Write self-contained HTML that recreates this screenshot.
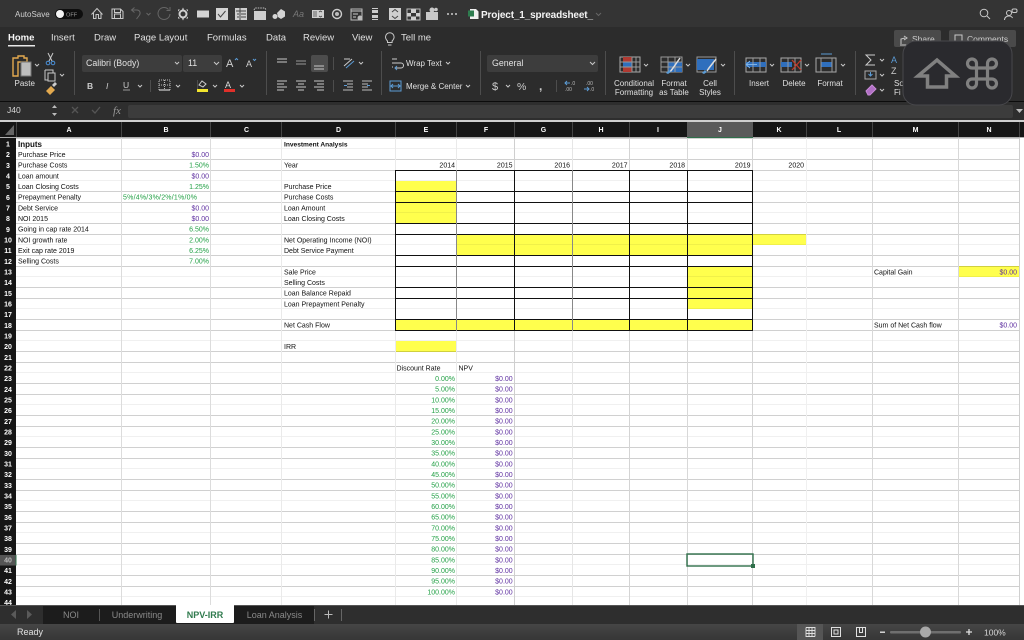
<!DOCTYPE html>
<html><head><meta charset="utf-8"><title>Project_1_spreadsheet_</title>
<style>
html,body{margin:0;padding:0;width:1024px;height:640px;overflow:hidden;background:#fff}
#wrap{position:absolute;left:0;top:0;width:1024px;height:640px;overflow:hidden;background:#fff;filter:blur(.32px)}
svg{position:absolute;left:0;top:0;font-family:"Liberation Sans",sans-serif}
#grid{position:absolute;left:16px;top:137px;width:1003px;height:468px;mix-blend-mode:multiply;
background-image:linear-gradient(to bottom,transparent 1px,#d0d0d0 1px,#d0d0d0 2px,transparent 2px,transparent 11px,#f0f0f0 11px,#f0f0f0 12px,transparent 12px,transparent 22px,#d0d0d0 22px,#d0d0d0 23px,transparent 23px);
background-size:100% 32px}
#y{position:absolute;left:0;top:0}
#y div{position:absolute;background:#ffff4d}
.c{fill:none;stroke:#c8c8c8;stroke-width:1}
.d{fill:none;stroke:#666;stroke-width:1}
.f{fill:#c8c8c8}
.ch{fill:none;stroke:#c8c8c8;stroke-width:1}
.rb{fill:#e0e0e0;font-size:8px}
.tb{fill:#e0e0e0;font-size:9.5px}
.rn{fill:#fff;font-size:7px;font-weight:bold;text-anchor:middle}
.hd{fill:#fff;font-size:7px;font-weight:bold;text-anchor:middle}
.k{fill:#111;font-size:7px}
.b{font-weight:bold}
.p{fill:#5e2fa0;font-size:7px;text-anchor:end}
.g{fill:#22a045;font-size:7px;text-anchor:end}
.e{fill:#111;font-size:7px;text-anchor:end}
.tab{fill:#8a8a8a;font-size:9px;text-anchor:middle}
</style></head><body>
<div id="wrap">
<div id="y">
<div style="left:395px;top:181px;width:62px;height:42px"></div>
<div style="left:457px;top:234px;width:296px;height:21px"></div>
<div style="left:753px;top:234px;width:53px;height:11px"></div>
<div style="left:687px;top:266px;width:66px;height:43px"></div>
<div style="left:395px;top:319px;width:358px;height:11px"></div>
<div style="left:395px;top:341px;width:62px;height:11px"></div>
<div style="left:958px;top:266px;width:61px;height:11px"></div>
</div>
<div id="grid"></div>
<svg width="1024" height="640" viewBox="0 0 1024 640">
<!-- vertical gridlines -->
<g shape-rendering="crispEdges">
<rect x="121" y="137" width="1" height="468" fill="#dcdcdc"/>
<rect x="210" y="137" width="1" height="468" fill="#dcdcdc"/>
<rect x="281" y="137" width="1" height="468" fill="#eaeaea"/>
<rect x="395" y="137" width="1" height="468" fill="#eaeaea"/>
<rect x="456" y="137" width="1" height="468" fill="#eaeaea"/>
<rect x="514" y="137" width="1" height="468" fill="#cfcfcf"/>
<rect x="572" y="137" width="1" height="468" fill="#e6e6e6"/>
<rect x="629" y="137" width="1" height="468" fill="#d4d4d4"/>
<rect x="687" y="137" width="1" height="468" fill="#d8d8d8"/>
<rect x="752" y="137" width="1" height="468" fill="#d4d4d4"/>
<rect x="806" y="137" width="1" height="468" fill="#f0f0f0"/>
<rect x="872" y="137" width="1" height="468" fill="#d8d8d8"/>
<rect x="958" y="137" width="1" height="468" fill="#d8d8d8"/>
<rect x="1019" y="137" width="1" height="468" fill="#cfcfcf"/>
<!-- black borders -->
<g fill="#111">
<rect x="395" y="170" width="358" height="1"/><rect x="395" y="191" width="358" height="1"/>
<rect x="395" y="202" width="358" height="1"/><rect x="395" y="223" width="358" height="1"/>
<rect x="395" y="234" width="358" height="1"/><rect x="395" y="255" width="358" height="1"/>
<rect x="395" y="266" width="358" height="1"/><rect x="395" y="287" width="358" height="1"/>
<rect x="395" y="298" width="358" height="1"/><rect x="395" y="319" width="358" height="1"/>
<rect x="395" y="330" width="358" height="1"/>
<rect x="395" y="170" width="1" height="161"/><rect x="514" y="170" width="1" height="161"/>
<rect x="629" y="170" width="1" height="161"/><rect x="687" y="170" width="1" height="161"/>
<rect x="752" y="170" width="1" height="161"/>
</g>
<rect x="456" y="170" width="1" height="161" fill="#888"/>
<rect x="572" y="170" width="1" height="161" fill="#888"/>
</g>

<!-- sheet text -->
<g>
<text class="k b" x="18" y="146.8" style="font-size:8px">Inputs</text>
<text class="k" x="18" y="157">Purchase Price</text>
<text class="k" x="18" y="167.7">Purchase Costs</text>
<text class="k" x="18" y="178.4">Loan amount</text>
<text class="k" x="18" y="189">Loan Closing Costs</text>
<text class="k" x="18" y="199.7">Prepayment Penalty</text>
<text class="k" x="18" y="210.4">Debt Service</text>
<text class="k" x="18" y="221">NOI 2015</text>
<text class="k" x="18" y="231.7">Going in cap rate 2014</text>
<text class="k" x="18" y="242.4">NOI growth rate</text>
<text class="k" x="18" y="253">Exit cap rate 2019</text>
<text class="k" x="18" y="263.7">Selling Costs</text>

<text class="p" x="209" y="157">$0.00</text>
<text class="g" x="209" y="167.7">1.50%</text>
<text class="p" x="209" y="178.4">$0.00</text>
<text class="g" x="209" y="189">1.25%</text>
<text class="g" x="123" y="199.7" style="text-anchor:start" textLength="74">5%/4%/3%/2%/1%/0%</text>
<text class="p" x="209" y="210.4">$0.00</text>
<text class="p" x="209" y="221">$0.00</text>
<text class="g" x="209" y="231.7">6.50%</text>
<text class="g" x="209" y="242.4">2.00%</text>
<text class="g" x="209" y="253">6.25%</text>
<text class="g" x="209" y="263.7">7.00%</text>

<text class="k b" x="284" y="146.4" style="font-size:6.6px">Investment Analysis</text>
<text class="k" x="284" y="167.7">Year</text>
<text class="k" x="284" y="189">Purchase Price</text>
<text class="k" x="284" y="199.7">Purchase Costs</text>
<text class="k" x="284" y="210.4">Loan Amount</text>
<text class="k" x="284" y="221">Loan Closing Costs</text>
<text class="k" x="284" y="242.4">Net Operating Income (NOI)</text>
<text class="k" x="284" y="253">Debt Service Payment</text>
<text class="k" x="284" y="274.4">Sale Price</text>
<text class="k" x="284" y="285">Selling Costs</text>
<text class="k" x="284" y="295.7">Loan Balance Repaid</text>
<text class="k" x="284" y="306.4">Loan Prepayment Penalty</text>
<text class="k" x="284" y="327.7">Net Cash Flow</text>
<text class="k" x="284" y="349">IRR</text>

<text class="e" x="455" y="167.7">2014</text>
<text class="e" x="512.5" y="167.7">2015</text>
<text class="e" x="570" y="167.7">2016</text>
<text class="e" x="627.5" y="167.7">2017</text>
<text class="e" x="685" y="167.7">2018</text>
<text class="e" x="750.5" y="167.7">2019</text>
<text class="e" x="804" y="167.7">2020</text>

<text class="k" x="874" y="274.4">Capital Gain</text>
<text class="p" x="1017" y="274.4">$0.00</text>
<text class="k" x="874" y="327.7">Sum of Net Cash flow</text>
<text class="p" x="1017" y="327.7">$0.00</text>

<text class="k" x="396.5" y="370.4">Discount Rate</text>
<text class="k" x="458.5" y="370.4">NPV</text>

<g>
<text class="g" x="455" y="381">0.00%</text><text class="p" x="512.7" y="381">$0.00</text>
<text class="g" x="455" y="391.7">5.00%</text><text class="p" x="512.7" y="391.7">$0.00</text>
<text class="g" x="455" y="402.4">10.00%</text><text class="p" x="512.7" y="402.4">$0.00</text>
<text class="g" x="455" y="413">15.00%</text><text class="p" x="512.7" y="413">$0.00</text>
<text class="g" x="455" y="423.7">20.00%</text><text class="p" x="512.7" y="423.7">$0.00</text>
<text class="g" x="455" y="434.4">25.00%</text><text class="p" x="512.7" y="434.4">$0.00</text>
<text class="g" x="455" y="445">30.00%</text><text class="p" x="512.7" y="445">$0.00</text>
<text class="g" x="455" y="455.7">35.00%</text><text class="p" x="512.7" y="455.7">$0.00</text>
<text class="g" x="455" y="466.4">40.00%</text><text class="p" x="512.7" y="466.4">$0.00</text>
<text class="g" x="455" y="477">45.00%</text><text class="p" x="512.7" y="477">$0.00</text>
<text class="g" x="455" y="487.7">50.00%</text><text class="p" x="512.7" y="487.7">$0.00</text>
<text class="g" x="455" y="498.4">55.00%</text><text class="p" x="512.7" y="498.4">$0.00</text>
<text class="g" x="455" y="509">60.00%</text><text class="p" x="512.7" y="509">$0.00</text>
<text class="g" x="455" y="519.7">65.00%</text><text class="p" x="512.7" y="519.7">$0.00</text>
<text class="g" x="455" y="530.4">70.00%</text><text class="p" x="512.7" y="530.4">$0.00</text>
<text class="g" x="455" y="541">75.00%</text><text class="p" x="512.7" y="541">$0.00</text>
<text class="g" x="455" y="551.7">80.00%</text><text class="p" x="512.7" y="551.7">$0.00</text>
<text class="g" x="455" y="562.4">85.00%</text><text class="p" x="512.7" y="562.4">$0.00</text>
<text class="g" x="455" y="573">90.00%</text><text class="p" x="512.7" y="573">$0.00</text>
<text class="g" x="455" y="583.7">95.00%</text><text class="p" x="512.7" y="583.7">$0.00</text>
<text class="g" x="455" y="594.4">100.00%</text><text class="p" x="512.7" y="594.4">$0.00</text>
</g>
</g>

<!-- selected cell -->
<rect x="687" y="554" width="66" height="12" fill="none" stroke="#2f6f4a" stroke-width="1.4"/>
<rect x="751" y="564" width="4" height="4" fill="#2f6f4a"/>

<!-- row headers -->
<rect x="0" y="137" width="16" height="468" fill="#161616"/>
<rect x="0" y="555" width="16" height="10.5" fill="#555"/>
<rect x="15.5" y="555" width="1" height="10.5" fill="#2f6f4a"/>
<g>
<text class="rn" x="8" y="146.5">1</text><text class="rn" x="8" y="157.2">2</text><text class="rn" x="8" y="167.8">3</text><text class="rn" x="8" y="178.5">4</text><text class="rn" x="8" y="189.2">5</text><text class="rn" x="8" y="199.8">6</text><text class="rn" x="8" y="210.5">7</text><text class="rn" x="8" y="221.2">8</text><text class="rn" x="8" y="231.8">9</text><text class="rn" x="8" y="242.5">10</text><text class="rn" x="8" y="253.2">11</text><text class="rn" x="8" y="263.8">12</text><text class="rn" x="8" y="274.5">13</text><text class="rn" x="8" y="285.2">14</text><text class="rn" x="8" y="295.8">15</text><text class="rn" x="8" y="306.5">16</text><text class="rn" x="8" y="317.2">17</text><text class="rn" x="8" y="327.8">18</text><text class="rn" x="8" y="338.5">19</text><text class="rn" x="8" y="349.2">20</text><text class="rn" x="8" y="359.8">21</text><text class="rn" x="8" y="370.5">22</text><text class="rn" x="8" y="381.2">23</text><text class="rn" x="8" y="391.8">24</text><text class="rn" x="8" y="402.5">25</text><text class="rn" x="8" y="413.2">26</text><text class="rn" x="8" y="423.8">27</text><text class="rn" x="8" y="434.5">28</text><text class="rn" x="8" y="445.2">29</text><text class="rn" x="8" y="455.8">30</text><text class="rn" x="8" y="466.5">31</text><text class="rn" x="8" y="477.2">32</text><text class="rn" x="8" y="487.8">33</text><text class="rn" x="8" y="498.5">34</text><text class="rn" x="8" y="509.2">35</text><text class="rn" x="8" y="519.8">36</text><text class="rn" x="8" y="530.5">37</text><text class="rn" x="8" y="541.2">38</text><text class="rn" x="8" y="551.8">39</text><text class="rn" x="8" y="562.5" style="fill:#bbb">40</text><text class="rn" x="8" y="573.2">41</text><text class="rn" x="8" y="583.8">42</text><text class="rn" x="8" y="594.5">43</text><text class="rn" x="8" y="605">44</text>
</g>

<!-- column headers -->
<rect x="0" y="120" width="1024" height="2" fill="#cfcfcf"/>
<rect x="0" y="122" width="1024" height="15" fill="#161616"/>
<rect x="0" y="137" width="1024" height="1" fill="#b0b0b0"/>
<polygon points="5,135 14,135 14,125" fill="#666"/>
<rect x="687" y="122" width="66" height="15" fill="#5a5a5a"/>
<rect x="687" y="137" width="66" height="1" fill="#2f6f4a"/>
<g fill="#444" shape-rendering="crispEdges">
<rect x="16" y="122" width="1" height="15"/><rect x="121" y="122" width="1" height="15"/><rect x="210" y="122" width="1" height="15"/><rect x="281" y="122" width="1" height="15"/><rect x="395" y="122" width="1" height="15"/><rect x="456" y="122" width="1" height="15"/><rect x="514" y="122" width="1" height="15"/><rect x="572" y="122" width="1" height="15"/><rect x="629" y="122" width="1" height="15"/><rect x="806" y="122" width="1" height="15"/><rect x="872" y="122" width="1" height="15"/><rect x="958" y="122" width="1" height="15"/><rect x="1019" y="122" width="1" height="15"/>
</g>
<g>
<text class="hd" x="69" y="132">A</text><text class="hd" x="166" y="132">B</text><text class="hd" x="246.5" y="132">C</text><text class="hd" x="338.5" y="132">D</text><text class="hd" x="426" y="132">E</text><text class="hd" x="486" y="132">F</text><text class="hd" x="543.5" y="132">G</text><text class="hd" x="601" y="132">H</text><text class="hd" x="658" y="132">I</text><text class="hd" x="720" y="132">J</text><text class="hd" x="779" y="132">K</text><text class="hd" x="839" y="132">L</text><text class="hd" x="915.5" y="132">M</text><text class="hd" x="989" y="132">N</text>
</g>

<!-- top chrome backgrounds -->
<rect x="0" y="0" width="1024" height="27" fill="#343434"/>
<rect x="0" y="27" width="1024" height="74" fill="#2c2c2c"/>
<rect x="0" y="101" width="1024" height="1" fill="#0c0c0c"/>
<rect x="0" y="102" width="1024" height="18" fill="#2e2e2e"/>
<rect x="128" y="105" width="885" height="13" rx="2" fill="#3c3c3c"/>

<!-- title bar -->
<text x="15" y="17" fill="#d0d0d0" style="font-size:8px">AutoSave</text>
<rect x="55" y="9" width="28" height="10" rx="5" fill="#0e0e0e"/>
<circle cx="60" cy="14" r="4" fill="#f4f4f4"/>
<text x="66" y="16.3" fill="#999" style="font-size:5.6px">OFF</text>
<path class="c" d="M91.5 14.5 97 8.5l5.5 6M93.5 13v5.5h2.5v-4h2.5v4h2.5V13"/>
<path class="c" d="M112 9h8.5l2.5 2.5V18.5H112ZM114.5 9v3.5h6V9M114.5 18.500v-4.500h6v4.500"/>
<path class="d" d="M136.5 19l3-4c1.500-2.500 0-5-2.500-5h-5M134.500 7.500 131.500 10l3 2.500"/>
<path class="d" d="M146.5 13l2 2 2-2"/>
<path class="d" d="M168.500 9.500a6 6 0 1 0 1.500 4.500M170 7v3.500h-3.500"/>
<circle cx="183" cy="14" r="3.500" fill="none" stroke="#d0d0d0" stroke-width="2"/><path d="M178 9.500h2l-2 2ZM188 9.500h-2l2 2ZM178 18.500h2l-2-2ZM188 18.500h-2l2-2ZM183 7.500l1 2h-2ZM183 20.500l1-2h-2Z" fill="#d0d0d0"/>
<rect x="197" y="10.500" width="12" height="7" fill="#d4d4d4"/>
<rect x="216" y="8" width="12" height="12" fill="#d4d4d4"/><path d="M218 14l2.500 3 5-6" fill="none" stroke="#444" stroke-width="1"/>
<rect x="235" y="8" width="12" height="12" fill="#cfcfcf"/><path d="M236 11h10M240 8v12M241 14h5M241 17h5M237 14h2M237 17h2" stroke="#444" stroke-width="1" fill="none"/>
<rect x="254" y="11" width="12" height="9" fill="#cfcfcf"/><path d="M254 10l1-2h10l1 2" fill="none" stroke="#bbb" stroke-dasharray="1.500 1"/>
<circle cx="275" cy="16.500" r="2.500" fill="#d4d4d4"/><path d="M277 13l4-4 4 2.500v5l-4 2.500-3-2Z" fill="#d4d4d4"/>
<text x="293" y="17" fill="#777" style="font-size:9px;font-style:italic">Aa</text>
<rect x="312" y="10" width="12" height="8" fill="#cfcfcf"/><path d="M313 12h4M313 14h4M313 16h4M319 12l1.500-1 1.500 1M319 16l1.500 1 1.500-1" stroke="#444" fill="none" stroke-width=".8"/>
<circle cx="337" cy="14" r="4.500" fill="none" stroke="#ccc" stroke-width="1.400"/><circle cx="337" cy="14" r="2" fill="#bbb"/>
<rect x="351" y="9" width="11" height="11" fill="none" stroke="#bbb"/><path d="M351 11h11M353 14h5M353 17h3" stroke="#ccc" fill="none"/><circle cx="360" cy="18" r="2.500" fill="#bbb"/>
<path d="M372 8.500h6M372 19.500h6" stroke="#ccc"/><rect x="372" y="10" width="6" height="3" fill="#ccc"/><rect x="372" y="15" width="6" height="3" fill="#ccc"/>
<rect x="389" y="8" width="12" height="12" fill="#cfcfcf"/><path d="M392 12l3-2.500 3 2.500M392 16l3 2.500 3-2.500" stroke="#444" fill="none"/>
<rect x="407" y="9" width="13" height="11" fill="none" stroke="#bbb"/><rect x="411" y="9" width="5" height="4" fill="#ccc"/><rect x="407" y="13" width="4" height="3.500" fill="#ccc"/><rect x="416" y="13" width="4" height="3.500" fill="#ccc"/><rect x="411" y="16.500" width="5" height="3.500" fill="#ccc"/>
<rect x="426" y="12" width="12" height="8" fill="#c8c8c8"/><circle cx="432" cy="10" r="2.500" fill="#c8c8c8"/><circle cx="436" cy="9.500" r="1.800" fill="#c8c8c8"/>
<circle cx="448" cy="14" r="1" fill="#ccc"/><circle cx="452" cy="14" r="1" fill="#ccc"/><circle cx="456" cy="14" r="1" fill="#ccc"/>
<path d="M470 9h6l2.500 2.500V19H470Z" fill="#f0f0f0"/><rect x="468" y="10.500" width="6" height="6" fill="#2e7d4f"/>
<text x="481" y="18" fill="#f4f4f4" style="font-size:10px;font-weight:bold" textLength="112" lengthAdjust="spacing">Project_1_spreadsheet_</text>
<path class="d" d="M596 13l2.500 2.500 2.500-2.500"/>
<circle cx="984" cy="13" r="3.800" class="c"/><path class="c" d="M987 16l3 3"/>
<circle cx="1009" cy="13" r="2.500" class="c"/><path class="c" d="M1004.500 20c0-2.500 2-4 4.500-4s3 1 3.500 2"/><rect x="1012" y="9" width="5" height="3.500" rx="1.500" class="c"/>

<!-- tabs -->
<text x="8" y="40.500" fill="#f8f8f8" style="font-size:9.500px;font-weight:bold">Home</text>
<rect x="8" y="45" width="27" height="1.500" fill="#e8e8e8"/>
<text class="tb" x="51" y="40.500">Insert</text>
<text class="tb" x="94" y="40.500">Draw</text>
<text class="tb" x="134" y="40.500">Page Layout</text>
<text class="tb" x="207" y="40.500">Formulas</text>
<text class="tb" x="266" y="40.500">Data</text>
<text class="tb" x="303" y="40.500">Review</text>
<text class="tb" x="352" y="40.500">View</text>
<path class="c" d="M387.500 41c-1-1-2-2-2-4a4.300 4.300 0 0 1 8.600 0c0 2-1 3-2 4v1.500h-4.600ZM388 45h3.500"/>
<text class="tb" x="401" y="40.500">Tell me</text>
<rect x="894" y="30" width="47" height="17" rx="2" fill="#4a4a4a"/>
<path class="c" d="M901 44v-5l4-1M904 36l3 2-3 2M900 45h8"/>
<text x="912" y="42" fill="#ccc" style="font-size:8.500px">Share</text>
<rect x="949" y="30" width="67" height="17" rx="2" fill="#4a4a4a"/>
<rect x="955" y="35" width="7" height="6" class="c"/>
<text x="967" y="42" fill="#ccc" style="font-size:8.500px">Comments</text>

<!-- separators -->
<g fill="#4d4d4d" shape-rendering="crispEdges">
<rect x="74" y="51" width="1" height="44"/><rect x="266" y="51" width="1" height="44"/><rect x="381" y="51" width="1" height="44"/><rect x="480" y="51" width="1" height="44"/><rect x="605" y="51" width="1" height="44"/><rect x="734" y="51" width="1" height="44"/><rect x="855" y="51" width="1" height="44"/>
<rect x="150" y="80" width="1" height="12"/><rect x="197" y="80" width="1" height="12"/><rect x="333" y="57" width="1" height="13"/><rect x="333" y="80" width="1" height="12"/><rect x="556" y="80" width="1" height="12"/>
</g>

<!-- clipboard -->
<path d="M13 58h5v-2h6v2h3v4h-9v14h-5Z" fill="none" stroke="#e3a94e" stroke-width="1.400"/>
<rect x="21" y="62" width="10" height="14" fill="#bdbdbd" stroke="#777"/>
<path class="ch" d="M35 64l2 2 2-2"/>
<text class="rb" x="14.500" y="86">Paste</text>
<path d="M48 53l4 8M53 53l-4 8" stroke="#c8c8c8" fill="none"/><circle cx="48" cy="63" r="1.800" fill="none" stroke="#4a90d9"/><circle cx="53" cy="63" r="1.800" fill="none" stroke="#4a90d9"/>
<path class="c" d="M45 70h8v3M45 70v10h3"/><rect x="48" y="73" width="7" height="8" class="c"/><path class="ch" d="M60 74l2 2 2-2"/>
<path d="M46 91l5-5 4 4-5 5Z" fill="#e3a94e"/><path d="M52 85l3-3 2 2-3 3Z" fill="#ccc"/>

<!-- font group -->
<rect x="82" y="55" width="100" height="17" rx="2" fill="#3d3d3d"/>
<text x="86" y="66" fill="#e2e2e2" style="font-size:8.800px">Calibri (Body)</text>
<path class="ch" d="M175 62l2 2 2-2"/>
<rect x="183" y="55" width="39" height="17" rx="2" fill="#3d3d3d"/>
<text x="188" y="66" fill="#e2e2e2" style="font-size:8.800px">11</text>
<path class="ch" d="M214 62l2.500 2.500 2.500-2.500"/>
<text x="226" y="67" fill="#d0d0d0" style="font-size:11px">A</text><path d="M235 60l1.500-1.500 1.500 1.500" fill="none" stroke="#5b9bd5"/>
<text x="246" y="67" fill="#d0d0d0" style="font-size:9px">A</text><path d="M253 59l1.500 1.500 1.500-1.500" fill="none" stroke="#5b9bd5"/>
<text x="87" y="89" fill="#ccc" style="font-size:8.500px;font-weight:bold">B</text>
<text x="106" y="89" fill="#ccc" style="font-size:8.500px;font-style:italic">I</text>
<text x="123" y="88" fill="#ccc" style="font-size:8.500px">U</text><path d="M123 90h7" stroke="#999"/>
<path class="ch" d="M138 85l2 2 2-2"/>
<rect x="159" y="80" width="11" height="10" fill="none" stroke="#bbb" stroke-dasharray="1 1"/><path d="M164.500 80v10M159 85h11" stroke="#bbb" stroke-dasharray="1 1"/><path d="M159 90h11" stroke="#eee"/>
<path class="ch" d="M176 85l2 2 2-2"/>
<path d="M199 85l3-4 4 3-3 3Z" fill="none" stroke="#ccc"/><rect x="197" y="89" width="11" height="3" fill="#f2e52e"/>
<path class="ch" d="M213 85l2 2 2-2"/>
<text x="225" y="88" fill="#ddd" style="font-size:9px">A</text><rect x="224" y="89" width="11" height="3" fill="#e0302a"/>
<path class="ch" d="M240 85l2 2 2-2"/>

<!-- alignment -->
<rect x="311" y="55" width="17" height="17" rx="2" fill="#4c4c4c"/>
<g stroke="#c8c8c8" fill="none">
<path d="M277 59h10M277 62h10"/><path d="M296 61h10M296 64h10" stroke="#999"/><path d="M314 66h10M314 69h10"/>
<path d="M277 81h10M277 84h7M277 87h10M277 90h7"/><path d="M296 81h10M298 84h6M296 87h10M298 90h6"/><path d="M314 81h10M317 84h7M314 87h10M317 90h7"/>
</g>
<path d="M344 66l8-7M344 59h6" stroke="#ccc" fill="none"/><path d="M346 68l8-7" stroke="#5b9bd5" fill="none"/>
<path class="ch" d="M359 62l2 2 2-2"/>
<path d="M343 81h10M347 84h6M347 87h6M343 90h10M362 81h10M362 84h6M362 87h6M362 90h10" stroke="#bbb" fill="none"/>
<path d="M344 85.500h3M367 85.500h3" stroke="#5b9bd5"/>

<!-- wrap/merge -->
<path d="M392 59h5M392 63h9a2 2 0 0 1 0 5h-6M392 67h1" fill="none" stroke="#ccc"/><path d="M397 66l-2 2 2 2" fill="none" stroke="#5b9bd5"/>
<text class="rb" x="406" y="66">Wrap Text</text><path class="ch" d="M446 62l2 2 2-2"/>
<rect x="390" y="81" width="11" height="10" fill="none" stroke="#5b9bd5"/><path d="M390 86h11M393 84l-2 2 2 2M398 84l2 2-2 2" stroke="#5b9bd5" fill="none"/>
<text class="rb" x="406" y="89">Merge &amp; Center</text><path class="ch" d="M466 85l2 2 2-2"/>

<!-- number -->
<rect x="487" y="55" width="111" height="17" rx="2" fill="#3d3d3d"/>
<text x="492" y="66" fill="#e2e2e2" style="font-size:8.800px">General</text>
<path class="ch" d="M590 62l2.500 2.500 2.500-2.500"/>
<text x="492" y="90" fill="#ccc" style="font-size:11px">$</text><path class="ch" d="M506 85l2 2 2-2"/>
<text x="517" y="90" fill="#ccc" style="font-size:10.500px">%</text>
<text x="539" y="90" fill="#ccc" style="font-size:12px;font-weight:bold">,</text>
<path d="M565 83h5M567 81l-2 2 2 2" stroke="#5b9bd5" fill="none"/><text x="571" y="85" fill="#bbb" style="font-size:5px">.0</text><text x="565" y="91" fill="#bbb" style="font-size:5px">.00</text>
<text x="586" y="85" fill="#bbb" style="font-size:5px">.00</text><path d="M584 89h5M587 87l2 2-2 2" stroke="#5b9bd5" fill="none"/><text x="590" y="91" fill="#bbb" style="font-size:5px">.0</text>

<!-- styles -->
<rect x="620" y="57" width="20" height="15" fill="none" stroke="#aaa"/><rect x="623" y="57" width="9" height="5" fill="#b03a32"/><rect x="623" y="62" width="9" height="5" fill="#2f6fbd"/><rect x="623" y="67" width="9" height="5" fill="#b03a32"/><path d="M632 57v15M636 57v15M620 62h20M620 67h20" stroke="#999"/>
<path class="ch" d="M644 64l2 2 2-2"/>
<text class="rb" x="634" y="86" text-anchor="middle">Conditional</text><text class="rb" x="634" y="95" text-anchor="middle">Formatting</text>
<rect x="661" y="57" width="21" height="15" fill="none" stroke="#999"/><rect x="668" y="62" width="14" height="10" fill="#2f6fbd"/><path d="M668 57v15M675 57v15M661 62h21M661 67h21" stroke="#999"/><path d="M680 58l-7 10-3 4" stroke="#ddd" stroke-width="1.500" fill="none"/><path d="M669 70l2 2-3 2-2-1Z" fill="#5b9bd5"/>
<path class="ch" d="M686 64l2 2 2-2"/>
<text class="rb" x="674" y="86" text-anchor="middle">Format</text><text class="rb" x="674" y="95" text-anchor="middle">as Table</text>
<rect x="697" y="57" width="19" height="15" fill="none" stroke="#999"/><rect x="697" y="59" width="17" height="11" fill="#2f6fbd"/><path d="M716 59l-7 9-2 3" stroke="#ddd" stroke-width="1.500" fill="none"/><path d="M705 70l2 2-3 2-2-1Z" fill="#5b9bd5"/>
<path class="ch" d="M721 64l2 2 2-2"/>
<text class="rb" x="710" y="86" text-anchor="middle">Cell</text><text class="rb" x="710" y="95" text-anchor="middle">Styles</text>

<!-- cells -->
<rect x="746" y="58" width="20" height="14" fill="none" stroke="#aaa"/><rect x="746" y="62" width="20" height="5" fill="#2f6fbd"/><path d="M753 58v14M760 58v14" stroke="#999"/><path d="M757 64.500h-11M750 61l-4 3.500 4 3.500" stroke="#7db3e8" fill="none"/>
<path class="ch" d="M770 64l2 2 2-2"/>
<text class="rb" x="759" y="86" text-anchor="middle">Insert</text>
<rect x="781" y="58" width="20" height="14" fill="none" stroke="#aaa"/><rect x="781" y="62" width="11" height="5" fill="#2f6fbd"/><path d="M788 58v14M795 58v14" stroke="#999"/><path d="M792 60l9 10M801 60l-9 10" stroke="#c0392b" stroke-width="1.200"/>
<path class="ch" d="M805 64l2 2 2-2"/>
<text class="rb" x="794" y="86" text-anchor="middle">Delete</text>
<path d="M821 54h11" stroke="#5b9bd5"/><rect x="816" y="58" width="20" height="14" fill="none" stroke="#aaa"/><rect x="821" y="62" width="11" height="5" fill="#2f6fbd"/><path d="M821 58v14M832 58v14" stroke="#999"/>
<path class="ch" d="M841 64l2 2 2-2"/>
<text class="rb" x="830" y="86" text-anchor="middle">Format</text>

<!-- editing -->
<path d="M875 55h-9l5 5-5 5h9" fill="none" stroke="#ccc"/><path class="ch" d="M880 59l2 2 2-2"/>
<rect x="865" y="71" width="11" height="8" fill="none" stroke="#aaa"/><path d="M870.500 72v4M868.500 74l2 2 2-2" stroke="#5b9bd5" fill="none"/><path class="ch" d="M880 74l2 2 2-2"/>
<path d="M866 91l6-6 4 4-6 6-2 0Z" fill="#b06fc4" stroke="#c98ad8"/><path class="ch" d="M880 89l2 2 2-2"/>
<text x="891" y="63" fill="#5b9bd5" style="font-size:9px">A</text><text x="891" y="74" fill="#ccc" style="font-size:9px">Z</text>
<text class="rb" x="894" y="86">So</text><text class="rb" x="894" y="95">Fi</text>

<!-- formula bar -->
<text x="7" y="113" fill="#d8d8d8" style="font-size:8.500px">J40</text>
<path d="M52 108l2.500-3 2.500 3ZM52 113l2.500 3 2.500-3Z" fill="#bbb"/>
<path d="M72 107l6 6M78 107l-6 6M92 110l3 3 5-6" stroke="#555" stroke-width="1.300" fill="none"/>
<text x="113" y="114" fill="#999" style="font-family:'Liberation Serif',serif;font-size:11px;font-style:italic">fx</text>
<path d="M1016 109h7l-3.500 4Z" fill="#bbb"/>

<!-- overlay -->
<rect x="903" y="41" width="109" height="64" rx="13" fill="#2a2a2e" stroke="#48484c"/>
<path d="M918 76 937 60 955.500 76h-9v11h-19V76Z" fill="none" stroke="#808080" stroke-width="3.500" stroke-linejoin="miter"/>
<path d="M976.500 68h11v11h-11ZM976.500 68h-4.500a4.500 4.500 0 1 1 4.500-4.500V68ZM987.500 68V63.500a4.500 4.500 0 1 1 4.500 4.500h-4.500ZM987.500 79h4.500a4.500 4.500 0 1 1-4.500 4.500V79ZM976.500 79v4.500a4.500 4.500 0 1 1-4.500-4.500h4.500Z" fill="none" stroke="#808080" stroke-width="3.200"/>

<!-- sheet tabs -->
<rect x="0" y="605" width="1024" height="19" fill="#2e2e2e"/>
<rect x="0" y="605" width="1024" height="1" fill="#555"/>
<path d="M16 610v9l-5-4.500ZM27 610v9l5-4.500Z" fill="#5a5a5a"/>
<rect x="43" y="606" width="271" height="18" fill="#1c1c1c"/>
<rect x="99" y="609" width="1" height="12" fill="#555"/>
<rect x="314" y="609" width="1" height="12" fill="#666"/><rect x="341" y="609" width="1" height="12" fill="#666"/>
<rect x="315" y="606" width="26" height="18" fill="#2e2e2e"/>
<path d="M176 605h58v17q0 1-1 1h-56q-1 0-1-1Z" fill="#fff"/>
<text class="tab" x="71" y="618">NOI</text>
<text class="tab" x="137" y="618">Underwriting</text>
<text x="205" y="618" text-anchor="middle" fill="#2f7a4d" style="font-size:9px;font-weight:bold">NPV-IRR</text>
<text class="tab" x="274.500" y="618">Loan Analysis</text>
<path d="M324.500 614.500h8M328.500 610.500v8" stroke="#bbb"/>

<!-- status bar -->
<defs><linearGradient id="st" x1="0" y1="0" x2="0" y2="1"><stop offset="0" stop-color="#454545"/><stop offset="1" stop-color="#363636"/></linearGradient></defs>
<rect x="0" y="624" width="1024" height="16" fill="url(#st)"/>
<text x="17" y="635" fill="#e0e0e0" style="font-size:9px">Ready</text>
<rect x="797" y="624" width="26" height="16" fill="#555"/>
<path d="M806 627.500h9v9M806 627.500v9h9M809 627.500v9M812 627.500v9M806 630.500h9M806 633.500h9" fill="none" stroke="#e0e0e0" stroke-width=".9"/>
<rect x="831.500" y="627.500" width="9" height="9" class="c" style="stroke:#e0e0e0"/><rect x="834" y="630" width="4" height="4" class="c" style="stroke:#e0e0e0"/>
<path d="M856.500 627.500h9v9h-9ZM859.500 627.500v5h3v-5" fill="none" stroke="#e0e0e0"/>
<rect x="880" y="631.500" width="5" height="1.400" fill="#e0e0e0"/>
<rect x="890" y="631" width="71" height="2.500" rx="1" fill="#6f6f6f"/>
<circle cx="925.500" cy="632" r="5.500" fill="#a8a8a8"/>
<path d="M966 632h6M969 629v6" stroke="#e0e0e0" stroke-width="1.300"/>
<text x="984" y="635.500" fill="#d8d8d8" style="font-size:8.500px">100%</text>
</svg>
</div>
</body></html>
